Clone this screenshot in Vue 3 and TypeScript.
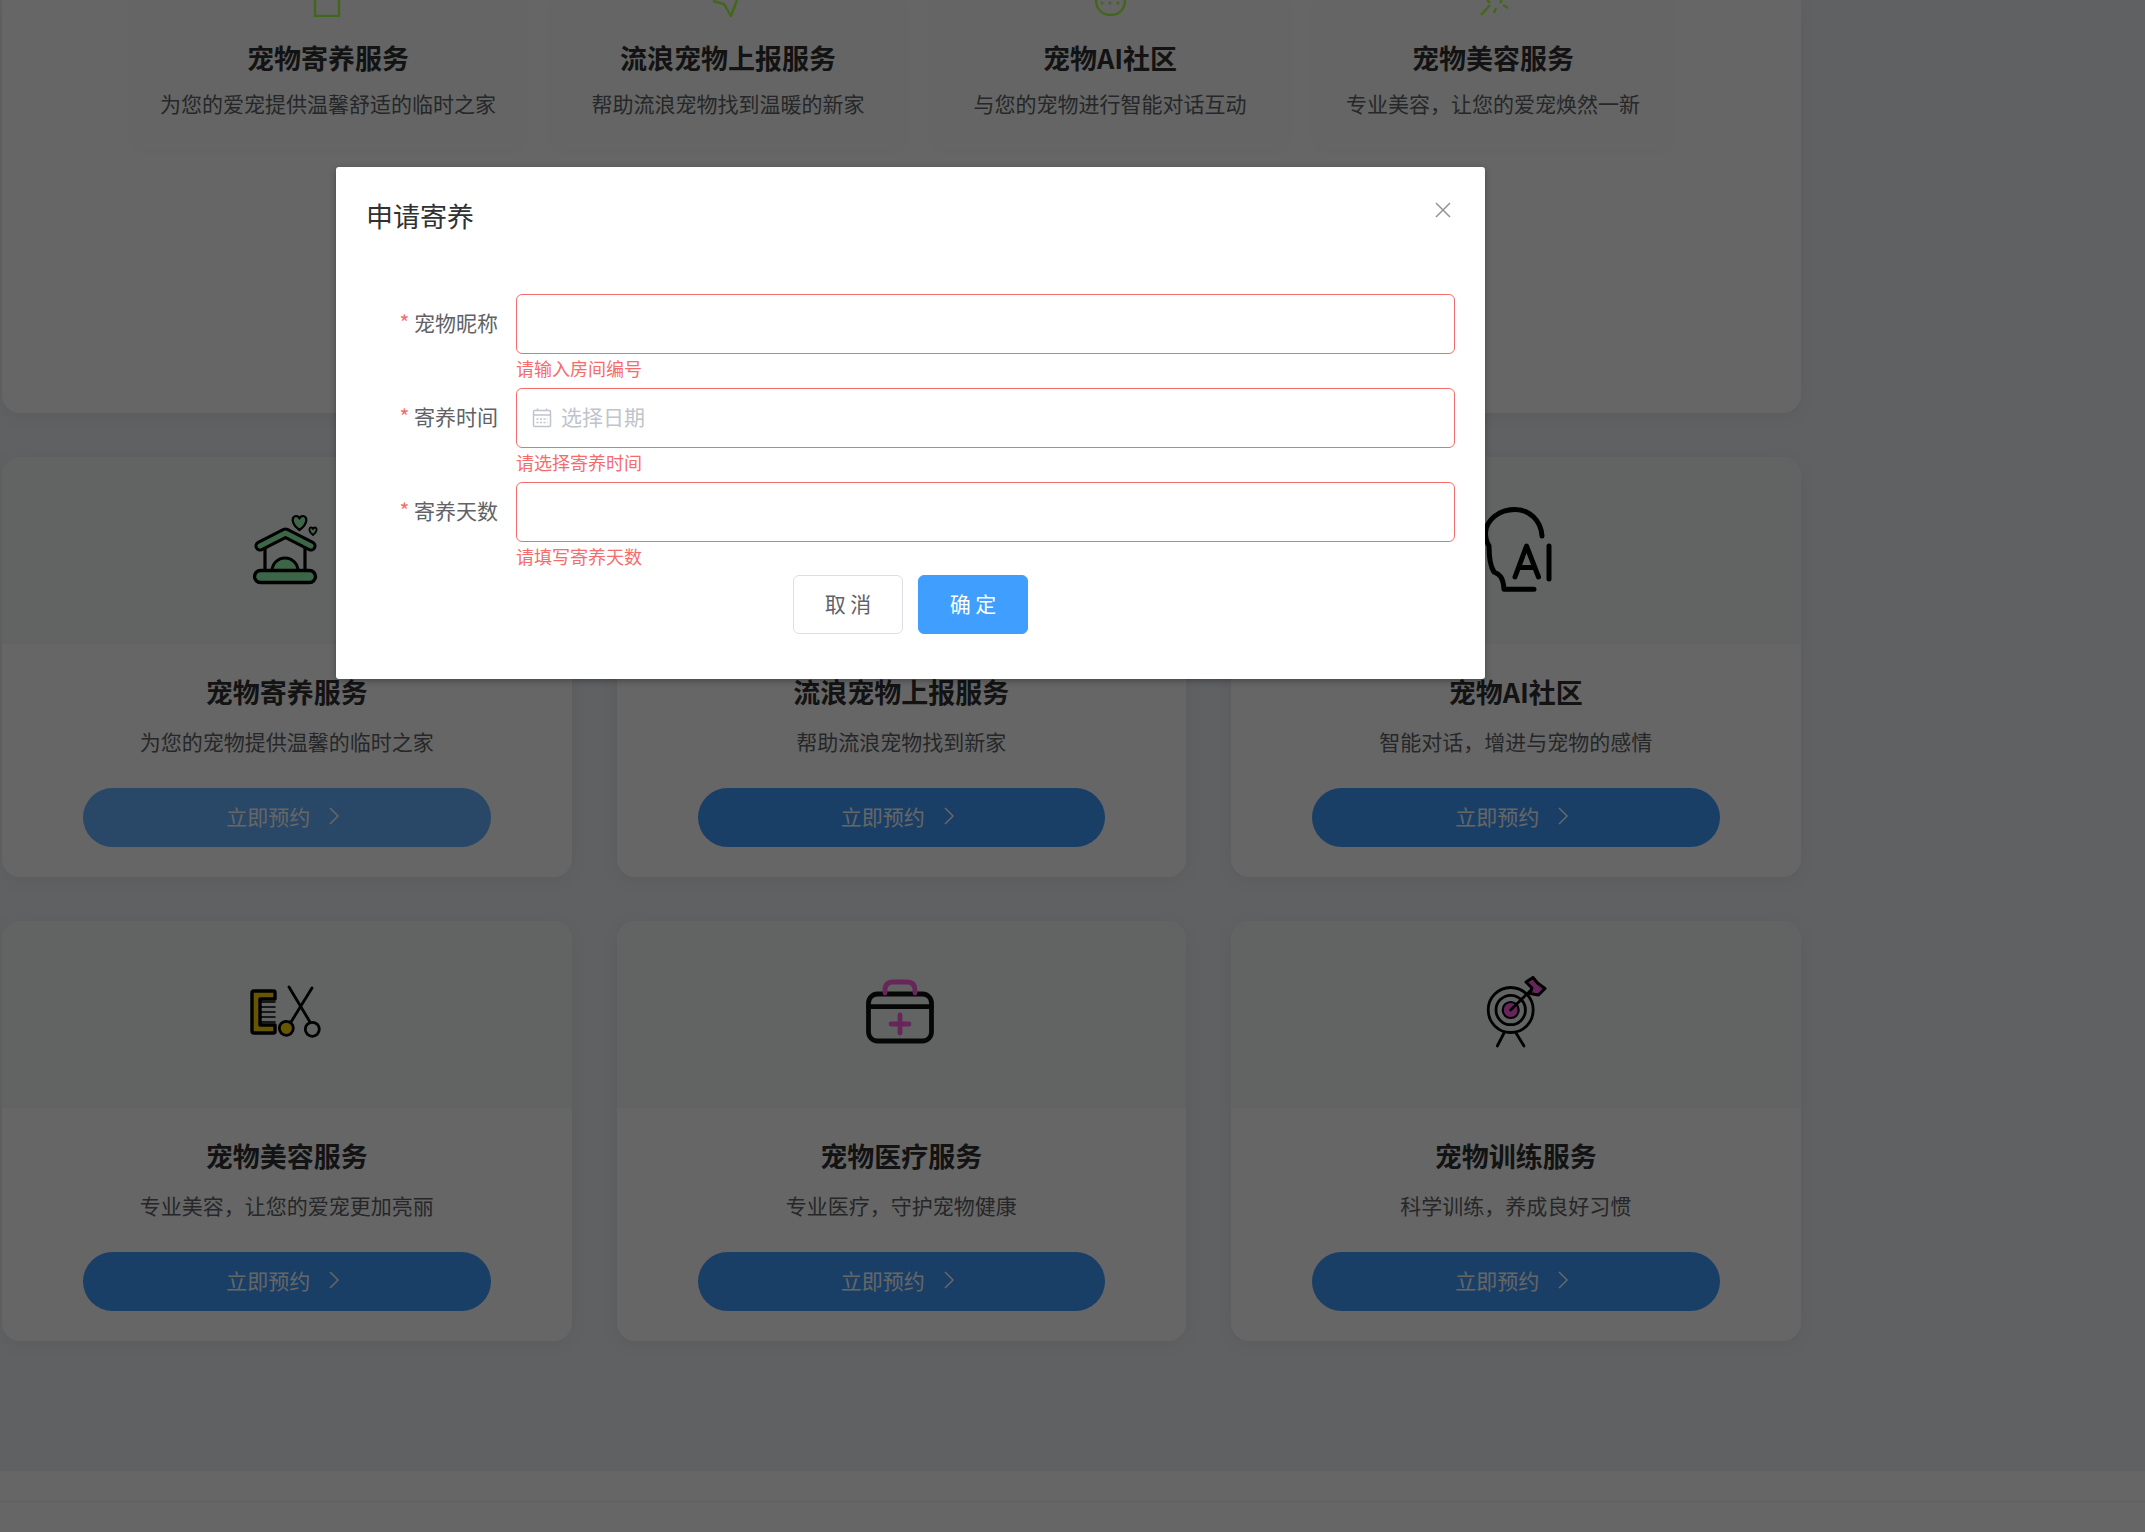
<script setup lang="ts">
interface ServiceCard {
  title: string
  desc: string
  icon: string
}

const topCards = [
  { title: '宠物寄养服务', desc: '为您的爱宠提供温馨舒适的临时之家', icon: 'box' },
  { title: '流浪宠物上报服务', desc: '帮助流浪宠物找到温暖的新家', icon: 'pin' },
  { title: '宠物AI社区', desc: '与您的宠物进行智能对话互动', icon: 'chat' },
  { title: '宠物美容服务', desc: '专业美容，让您的爱宠焕然一新', icon: 'spark' },
]

const services: ServiceCard[] = [
  { title: '宠物寄养服务', desc: '为您的宠物提供温馨的临时之家', icon: 'house' },
  { title: '流浪宠物上报服务', desc: '帮助流浪宠物找到新家', icon: 'none' },
  { title: '宠物AI社区', desc: '智能对话，增进与宠物的感情', icon: 'ai' },
  { title: '宠物美容服务', desc: '专业美容，让您的爱宠更加亮丽', icon: 'comb' },
  { title: '宠物医疗服务', desc: '专业医疗，守护宠物健康', icon: 'medical' },
  { title: '宠物训练服务', desc: '科学训练，养成良好习惯', icon: 'target' },
]

const fields = [
  { label: '宠物昵称', error: '请输入房间编号', date: false },
  { label: '寄养时间', error: '请选择寄养时间', date: true },
  { label: '寄养天数', error: '请填写寄养天数', date: false },
]
</script>

<template>
  <div class="page">
    <section class="panel">
      <div class="top-grid">
        <div v-for="c in topCards" :key="c.title" class="top-card">
          <svg class="top-icon" width="60" height="17" viewBox="0 0 60 17" fill="none" stroke="#a8ff4a" stroke-width="2.4">
            <path v-if="c.icon === 'box'" d="M17 0V16H41V0" />
            <path v-else-if="c.icon === 'pin'" d="M15 1L26 4L33 16L39 0" />
            <template v-else-if="c.icon === 'chat'">
              <path d="M16 0C16 9 22 15 31 15C40 15 45 8 45 0" />
              <path d="M22 3V3.100M30 3V3.100M38 3V3.100" stroke-width="3" stroke-linecap="round" />
            </template>
            <path v-else d="M18 15L27 5M31 13L33 8M45 8L40 5M24 0L27 3M37 3L39 0" />
          </svg>
          <h3 class="top-title">{{ c.title }}</h3>
          <p class="top-desc">{{ c.desc }}</p>
        </div>
      </div>
    </section>

    <section class="service-grid">
      <div v-for="(s, i) in services" :key="s.title + i" class="service-card">
        <div class="service-icon" :class="{ 'service-icon--first': i < 3 }">
          <svg width="90" height="90" viewBox="0 0 90 90" fill="none" stroke="#000" stroke-linecap="round" stroke-linejoin="round">
            <template v-if="s.icon === 'house'">
              <path d="M25 42V65M65 42V65" stroke-width="3.200" />
              <path d="M20 40L45.500 27L71 40" stroke-width="11" />
              <path d="M20 40L45.500 27L71 40" stroke="#98ffb4" stroke-width="5" />
              <path d="M32 65A13 13 0 0 1 58 65Z" fill="#98ffb4" stroke-width="3" />
              <rect x="14.500" y="64.500" width="61" height="12" rx="6" fill="#98ffb4" stroke-width="3.400" />
              <path d="M59.500 24C50 17 52 10 56 10C58 10 59 11 59.500 12.500C60 11 61 10 63 10C67 10 69 17 59.500 24Z" fill="#98ffb4" stroke-width="2.200" />
              <path d="M73 29C68 25.500 69 21.500 71 21.500C72 21.500 72.700 22 73 23C73.300 22 74 21.500 75 21.500C77 21.500 78 25.500 73 29Z" fill="#98ffb4" stroke-width="1.800" />
            </template>
            <template v-else-if="s.icon === 'ai'">
              <path d="M73 30C72 14 60 3.500 46 3.500C30 3.500 17 14 16.500 27C16.500 33 18 37 20 40C20 48 21 60 25 66C30 68 34 70 35 83.300H65" stroke-width="5" />
              <path d="M46 71L57.500 40L69.500 71M50 61.500H65M80 40V73" stroke-width="5" />
            </template>
            <template v-else-if="s.icon === 'comb'">
              <path d="M14 24H33.500Q35 24 35 25.500V32H20V58H35V64.500Q35 66 33.500 66H14Q12 66 12 64V26Q12 24 14 24Z" fill="#ffd700" stroke-width="3.400" />
              <path d="M20 35H35M20 40H35M20 45H35M20 50H35M20 55H35" stroke-width="1.600" />
              <path d="M49 20L70 55M72 21L51 55" stroke-width="2.800" />
              <circle cx="46.300" cy="61.300" r="7" fill="#ffd700" stroke-width="2.800" />
              <circle cx="72.300" cy="62.300" r="7" fill="none" stroke-width="2.800" />
            </template>
            <template v-else-if="s.icon === 'medical'">
              <rect x="14.500" y="27" width="63" height="47" rx="9" stroke="#111" stroke-width="4.800" />
              <path d="M14.500 39.700H77.500" stroke="#111" stroke-width="4.800" />
              <path d="M31 26V23Q31 15 39 15H53Q61 15 61 23V26M37 57H55M46 48V66" stroke="#ff5fe0" stroke-width="4.800" />
            </template>
            <template v-else-if="s.icon === 'target'">
              <circle cx="41.700" cy="43" r="22.500" stroke-width="2.800" />
              <circle cx="41.700" cy="43" r="14.700" stroke-width="2.800" />
              <circle cx="41.700" cy="43" r="8" fill="#ff5fe0" stroke-width="2.200" />
              <path d="M41.700 43L62 23" stroke-width="2.800" />
              <path d="M57 15L64 10.500L68.500 16L76 21.500L69.500 28L61 26.500L63 21Z" fill="#ff5fe0" stroke-width="3" />
              <path d="M35 66L28.300 79M47 66L55 79" stroke-width="2.800" />
            </template>
          </svg>
        </div>
        <h3 class="service-title">{{ s.title }}</h3>
        <p class="service-desc">{{ s.desc }}</p>
        <button class="service-btn" :class="{ 'service-btn--hover': i === 0 }">
          <span>立即预约</span>
          <svg width="12" height="20" viewBox="0 0 12 20" fill="none" stroke="currentColor" stroke-width="1.500">
            <path d="M2 2L10 10L2 18" />
          </svg>
        </button>
      </div>
    </section>

    <footer class="footer"><div class="footer-line"></div></footer>

    <div class="overlay"></div>

    <div class="dialog">
      <svg class="dialog-close" width="16" height="16" viewBox="0 0 16 16" fill="none" stroke="#909399" stroke-width="1.500">
        <path d="M1 1L15 15M15 1L1 15" />
      </svg>
      <h2 class="dialog-title">申请寄养</h2>
      <div class="form">
        <div v-for="f in fields" :key="f.label" class="form-row">
          <label class="form-label"><span class="req">*</span> {{ f.label }}</label>
          <div class="form-control">
            <div class="input">
              <template v-if="f.date">
                <svg width="20" height="20" viewBox="0 0 20 20" fill="none" stroke="#c0c4cc" stroke-width="1.500">
                  <rect x="1.500" y="2.500" width="17" height="16" rx="1" />
                  <path d="M1.500 7H18.500M5.500 0.500V3M14.500 0.500V3" />
                  <path d="M4.500 11H15.500M4.500 14.500H15.500" stroke-dasharray="2 1.500" />
                </svg>
                <span class="placeholder">选择日期</span>
              </template>
            </div>
            <div class="form-error">{{ f.error }}</div>
          </div>
        </div>
      </div>
      <div class="dialog-footer">
        <button class="btn">取 消</button>
        <button class="btn btn--primary">确 定</button>
      </div>
    </div>
  </div>
</template>

<style>
html, body { margin: 0; padding: 0; background: #f0f2f5; }
</style>

<style scoped>
.page {
  position: relative;
  width: 2145px;
  height: 1532px;
  overflow: hidden;
  background: #f0f2f5;
  font-family: "Noto Sans CJK SC", "Noto Sans", sans-serif;
}

.panel {
  width: 1799px;
  height: 413px;
  margin-left: 2px;
  padding-left: 128px;
  box-sizing: border-box;
  background: #fff;
  border-radius: 0 0 18px 18px;
  box-shadow: 0 3px 18px rgba(0, 0, 0, 0.06);
}

.top-grid {
  display: grid;
  grid-template-columns: 396px 358px 360px 360px;
  gap: 23px;
}

.top-card {
  height: 150px;
  background: #fafcfa;
  border-radius: 0 0 15px 15px;
  display: flex;
  flex-direction: column;
  align-items: center;
  box-shadow: 0 2px 10px rgba(0, 0, 0, 0.03);
}
.top-icon { display: block; flex-shrink: 0; }
.top-title {
  margin: 21px 0 0;
  font-size: 27px;
  line-height: 40px;
  font-weight: 700;
  color: #303133;
}
.top-desc {
  margin: 9px 0 0;
  font-size: 21px;
  line-height: 32px;
  font-weight: 400;
  color: #606266;
}

.service-grid {
  display: grid;
  grid-template-columns: repeat(3, 569.5px);
  column-gap: 45px;
  row-gap: 44px;
  margin: 44px 0 0 2px;
}

.service-card {
  height: 420px;
  background: #fff;
  border-radius: 18px;
  box-shadow: 0 3px 18px rgba(0, 0, 0, 0.06);
  display: flex;
  flex-direction: column;
  align-items: center;
  overflow: hidden;
}

.service-icon {
  width: 100%;
  height: 187px;
  padding-bottom: 5px;
  box-sizing: border-box;
  flex-shrink: 0;
  display: flex;
  align-items: center;
  justify-content: center;
  background: #f5f8f8;
}
.service-icon--first { padding-bottom: 0; }
.service-icon svg {
  display: block;
  margin-right: 4px;
  filter: blur(0.4px);
}

.service-title {
  margin: 28px 0 0;
  font-size: 27px;
  line-height: 40px;
  font-weight: 700;
  color: #303133;
}
.service-desc {
  margin: 13px 0 0;
  font-size: 21px;
  line-height: 32px;
  font-weight: 400;
  color: #606266;
}

.service-btn {
  margin-top: 31px;
  width: 407.5px;
  height: 59px;
  padding: 0 7px 4px 0;
  border: none;
  border-radius: 30px;
  background: #409eff;
  color: #fff;
  font: inherit;
  font-size: 21px;
  display: flex;
  align-items: center;
  justify-content: center;
  gap: 18px;
}
.service-btn--hover { background: #66b1ff; }

.footer {
  position: absolute;
  left: 0;
  right: 0;
  top: 1471px;
  height: 61px;
  background: #fff;
}
.footer-line {
  height: 1px;
  margin-top: 30px;
  background: #ebeef5;
}

.overlay {
  position: absolute;
  inset: 0;
  background: rgba(0, 0, 0, 0.6);
}

.dialog {
  position: absolute;
  left: 336px;
  top: 167px;
  width: 1149px;
  height: 512px;
  box-sizing: border-box;
  padding: 29px 30px 46px;
  background: #fff;
  border-radius: 3px;
  box-shadow: 0 2px 6px rgba(0, 0, 0, 0.3);
}

.dialog-close {
  position: absolute;
  right: 34px;
  top: 35px;
}

.dialog-title {
  margin: 0 0 58px;
  font-size: 27px;
  line-height: 40px;
  font-weight: 400;
  color: #303133;
}

.form-row {
  display: grid;
  grid-template-columns: 150px 1fr;
  margin-bottom: 34px;
}
.form-row:last-child { margin-bottom: 33px; }

.form-label {
  padding-right: 18px;
  line-height: 57px;
  font-size: 21px;
  color: #606266;
  text-align: right;
}
.req { color: #f56c6c; }

.form-control { position: relative; }

.input {
  height: 60px;
  box-sizing: border-box;
  border: 1px solid #f56c6c;
  border-radius: 6px;
  display: flex;
  align-items: center;
  padding-left: 15px;
  gap: 9px;
}
.placeholder {
  padding-bottom: 5px;
  font-size: 21px;
  color: #c0c4cc;
}

.form-error {
  position: absolute;
  left: 0;
  top: 65px;
  font-size: 18px;
  line-height: 18px;
  color: #f56c6c;
}

.dialog-footer {
  display: flex;
  justify-content: center;
  gap: 15px;
}

.btn {
  width: 110px;
  height: 59px;
  padding: 0 0 4px;
  box-sizing: border-box;
  border: 1.5px solid #dcdfe6;
  border-radius: 6px;
  background: #fff;
  color: #606266;
  font: inherit;
  font-size: 21px;
}
.btn--primary {
  background: #409eff;
  border-color: #409eff;
  color: #fff;
}
</style>
